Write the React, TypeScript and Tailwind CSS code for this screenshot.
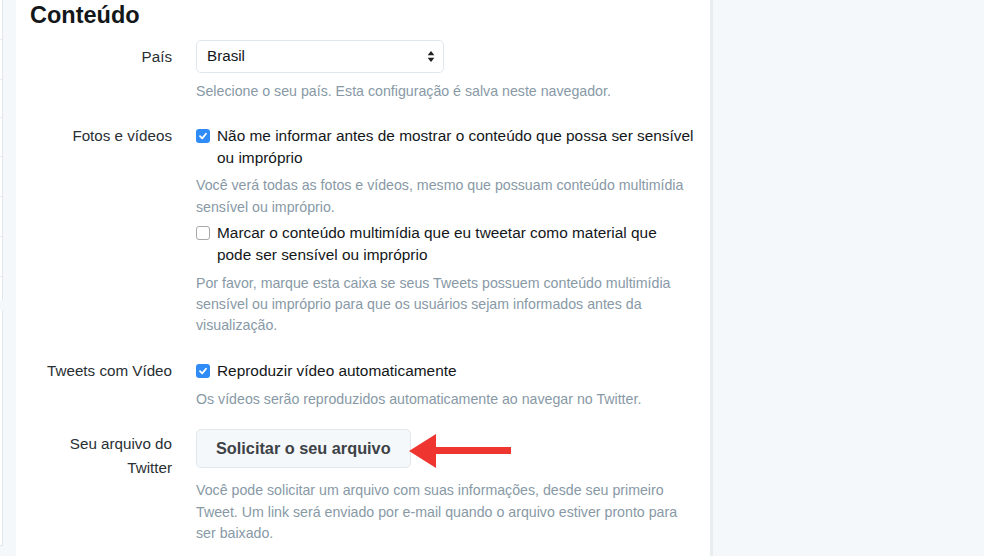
import React from "react";

const font = { fontFamily: '"Liberation Sans", Arial, sans-serif' };

function Check({ checked }: { checked: boolean }) {
  return checked ? (
    <span className="flex h-[14px] w-[14px] shrink-0 items-center justify-center rounded-[3px] bg-[#2f8cf6]">
      <svg width="10" height="10" viewBox="0 0 10 10">
        <path d="M2 5.2 L4.2 7.4 L8 2.8" fill="none" stroke="white" strokeWidth="1.8" strokeLinecap="round" strokeLinejoin="round" />
      </svg>
    </span>
  ) : (
    <span className="block h-[14px] w-[14px] shrink-0 rounded-[3px] border border-[#a8a8a8] bg-white" />
  );
}

function Row({ label, children, className = "" }: { label: React.ReactNode; children: React.ReactNode; className?: string }) {
  return (
    <div className={"flex " + className}>
      <div className="w-[156px] shrink-0 pl-[24px] text-right text-[15.2px] text-[#292f33]">{label}</div>
      <div className="ml-[24px] w-[506px]">{children}</div>
    </div>
  );
}

export default function App() {
  return (
    <div className="flex h-[556px] w-[984px] overflow-hidden bg-[#f5f8fa]" style={font}>
      <div className="w-[16px] shrink-0">
        <div className="flex h-[300px] w-[3px] flex-col border-r border-[#e1e8ed] bg-white">
          <div className="h-[40px] border-b border-[#e6ecf0]" />
          <div className="h-[40px] border-b border-[#e6ecf0]" />
          <div className="h-[38px] border-b border-[#e6ecf0]" />
          <div className="h-[39px] border-b border-[#e6ecf0]" />
          <div className="h-[40px] border-b border-[#e6ecf0]" />
          <div className="h-[40px] border-b border-[#e6ecf0]" />
          <div className="h-[40px] border-b border-[#e6ecf0]" />
        </div>
        <div className="mt-[10px] h-[236px] w-[3px] border-r border-b border-[#e1e8ed] bg-white" />
      </div>
      <div className="h-full w-[697px] shrink-0 border-r-[3px] border-[#e8edf0] bg-white">
        <h2 className="ml-[14px] mt-[1px] text-[23.5px] font-bold leading-[28px] text-[#14171a]">Conteúdo</h2>

        <Row label={<span className="leading-[33px]">País</span>} className="mt-[11px]">
          <div className="flex h-[33px] w-[248px] items-center justify-between rounded-[5px] border border-[#e1e8ed] bg-white pl-[10px] pr-[8px] text-[15.2px] text-[#14171a]">
            <span>Brasil</span>
            <svg width="8" height="13" viewBox="0 0 8 13">
              <path d="M4 1 L7.4 5.2 L0.6 5.2 Z" fill="#222" />
              <path d="M4 12 L7.4 7.8 L0.6 7.8 Z" fill="#222" />
            </svg>
          </div>
          <p className="mt-[8px] text-[14.2px] leading-[20px] text-[#8899a6]">
            Selecione o seu país. Esta configuração é salva neste navegador.
          </p>
        </Row>

        <Row label={<span className="block leading-[22px]">Fotos e vídeos</span>} className="mt-[24px]">
          <div className="flex">
            <span className="mr-[7px] mt-[4px] flex shrink-0"><Check checked /></span>
            <span className="text-[15.4px] leading-[22px] text-[#14171a]">
              Não me informar antes de mostrar o conteúdo que possa ser sensível ou impróprio
            </span>
          </div>
          <p className="mt-[5px] text-[14.2px] leading-[22px] text-[#8899a6]">
            Você verá todas as fotos e vídeos, mesmo que possuam conteúdo multimídia sensível ou impróprio.
          </p>
          <div className="mt-[4px] flex">
            <span className="mr-[7px] mt-[4px] flex shrink-0"><Check checked={false} /></span>
            <span className="text-[15.4px] leading-[22px] text-[#14171a]">
              Marcar o conteúdo multimídia que eu tweetar como material que
              <br />
              pode ser sensível ou impróprio
            </span>
          </div>
          <p className="mt-[7px] text-[14.2px] leading-[21px] text-[#8899a6]">
            Por favor, marque esta caixa se seus Tweets possuem conteúdo multimídia sensível ou impróprio para que os usuários sejam informados antes da visualização.
          </p>
        </Row>

        <Row label={<span className="block leading-[22px]">Tweets com Vídeo</span>} className="mt-[24px]">
          <div className="flex">
            <span className="mr-[7px] mt-[4px] flex shrink-0"><Check checked /></span>
            <span className="text-[15.4px] leading-[22px] text-[#14171a]">Reproduzir vídeo automaticamente</span>
          </div>
          <p className="mt-[6px] text-[14.2px] leading-[22px] text-[#8899a6]">
            Os vídeos serão reproduzidos automaticamente ao navegar no Twitter.
          </p>
        </Row>

        <Row label={<span className="mt-[3px] block leading-[24px]">Seu arquivo do Twitter</span>} className="mt-[19px]">
          <div className="relative">
            <button className="h-[39px] rounded-[5px] border border-[#e1e8ed] bg-[#f5f8fa] px-[19px] text-[16.3px] font-bold text-[#3d4247]">
              Solicitar o seu arquivo
            </button>
            <svg className="absolute left-[212px] top-[2px]" width="104" height="38" viewBox="0 0 104 38">
              <path d="M1 20 L28 3 L28 16 L103 16 L103 23 L28 23 L28 37 Z" fill="#ee3530" />
            </svg>
          </div>
          <p className="mt-[12px] text-[14.2px] leading-[21.5px] text-[#8899a6]">
            Você pode solicitar um arquivo com suas informações, desde seu primeiro
            <br />
            Tweet. Um link será enviado por e-mail quando o arquivo estiver pronto para
            <br />
            ser baixado.
          </p>
        </Row>
      </div>
      <div className="flex-1" />
    </div>
  );
}
